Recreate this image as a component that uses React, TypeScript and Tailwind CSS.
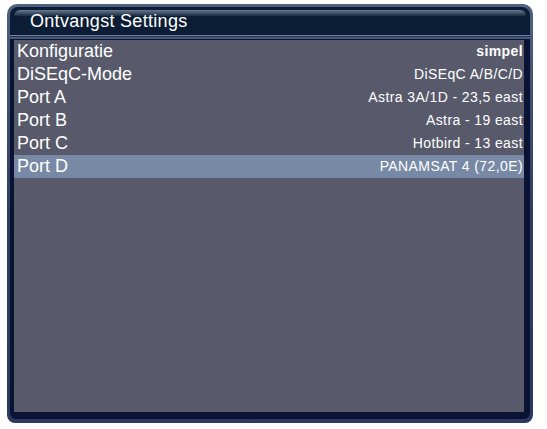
const rows = [
  { label: "Konfiguratie", value: "simpel", bold: true },
  { label: "DiSEqC-Mode", value: "DiSEqC A/B/C/D" },
  { label: "Port A", value: "Astra 3A/1D - 23,5 east" },
  { label: "Port B", value: "Astra - 19 east" },
  { label: "Port C", value: "Hotbird - 13 east" },
  { label: "Port D", value: "PANAMSAT 4 (72,0E)", active: true },
];

export default function App() {
  return (
    <div className="h-[429px] w-[547px] bg-white pl-[7px] pt-[4px] font-['Liberation_Sans',Arial,sans-serif]">
      <div className="flex h-[419px] w-[526px] flex-col rounded-t-[10px] rounded-b-[8px] bg-gradient-to-b from-[#4f6080] via-[#2e3d62] to-[#2a3960] p-[3px] pb-[4px]">
        {/* title bar */}
        <div className="relative h-[27px] rounded-t-[8px] bg-[#0c1e36] px-[4px] pt-[3px]">
          <div className="h-[6px] rounded-t-[6px] bg-gradient-to-b from-[#6a7a8e] to-[#1a2c44]" />
          <div className="absolute left-[20px] top-[3px] text-[18px] leading-[22px] tracking-[0.3px] text-white">Ontvangst Settings</div>
        </div>
        <div className="h-[1px] bg-[#0a1a30]" />
        <div className="h-[1px] bg-[#6f80a0]" />
        <div className="h-[1px] bg-[#22325a]" />
        {/* body */}
        <div className="mt-[2px] flex flex-1 rounded-b-[6px] bg-[#0a1432] pl-[4px] pr-[6px] pb-[7px]">
          <div className="flex-1 border-t-[1px] border-[#0a1430] bg-[#585a6b]">
            {rows.map((r) => (
              <div
                key={r.label}
                className={`flex h-[23px] items-center justify-between pl-[3px] pr-[1px] text-white ${r.active ? "bg-[#7889a6]" : ""}`}
              >
                <span className="text-[18px] leading-[23px]">{r.label}</span>
                <span className={`text-[14px] tracking-[0.4px] ${r.bold ? "font-bold" : ""}`}>{r.value}</span>
              </div>
            ))}
          </div>
        </div>
      </div>
    </div>
  );
}
